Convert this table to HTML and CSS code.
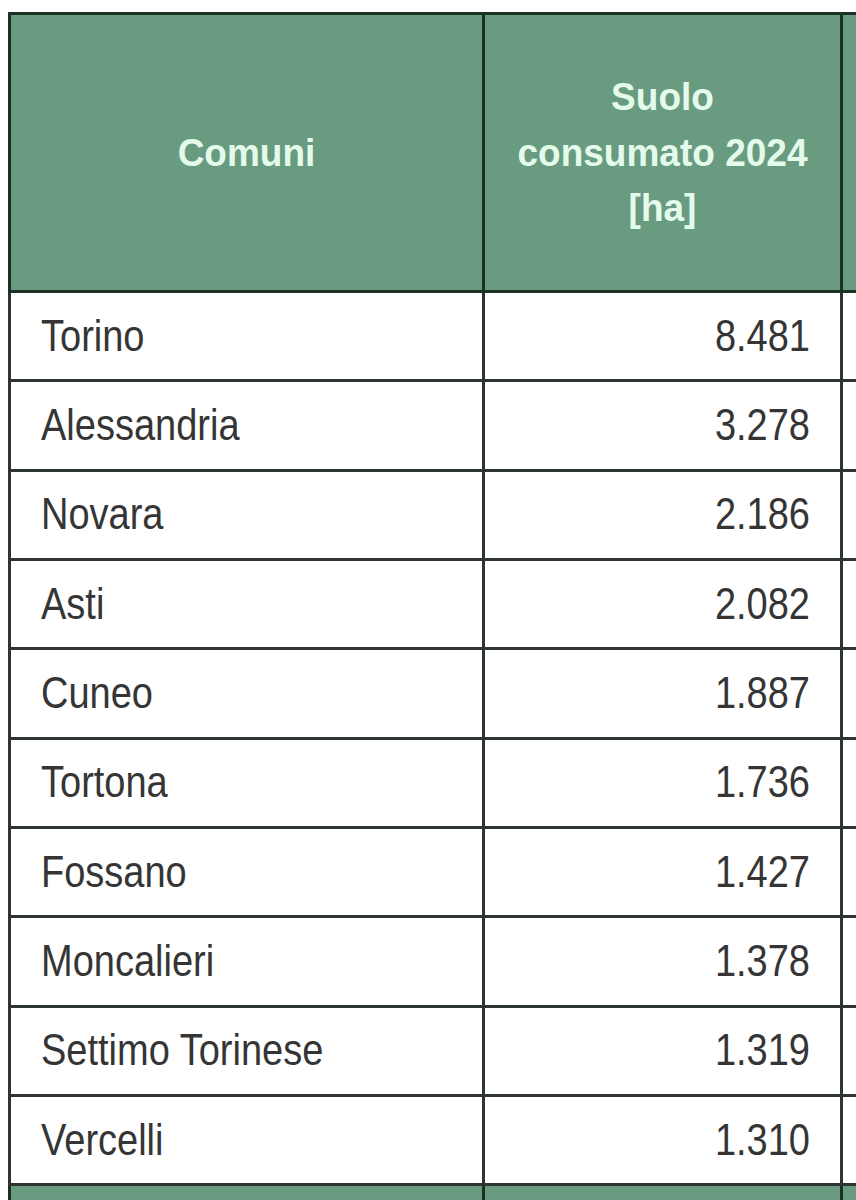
FILE: index.html
```html
<!DOCTYPE html>
<html lang="it">
<head>
<meta charset="utf-8">
<title>Suolo consumato 2024</title>
<link rel="stylesheet" href="styles.css">
</head>
<body>
<div class="page">
  <table class="data">
    <colgroup>
      <col class="c-name">
      <col class="c-val">
      <col class="c-extra">
    </colgroup>
    <thead>
      <tr>
        <th><span class="hs">Comuni</span></th>
        <th><span class="hs">Suolo<br>consumato 2024<br>[ha]</span></th>
        <th></th>
      </tr>
    </thead>
    <tbody>
      <tr><td class="name"><span class="bs">Torino</span></td><td class="num"><span class="bs">8.481</span></td><td></td></tr>
      <tr><td class="name"><span class="bs">Alessandria</span></td><td class="num"><span class="bs">3.278</span></td><td></td></tr>
      <tr><td class="name"><span class="bs">Novara</span></td><td class="num"><span class="bs">2.186</span></td><td></td></tr>
      <tr><td class="name"><span class="bs">Asti</span></td><td class="num"><span class="bs">2.082</span></td><td></td></tr>
      <tr><td class="name"><span class="bs">Cuneo</span></td><td class="num"><span class="bs">1.887</span></td><td></td></tr>
      <tr><td class="name"><span class="bs">Tortona</span></td><td class="num"><span class="bs">1.736</span></td><td></td></tr>
      <tr><td class="name"><span class="bs">Fossano</span></td><td class="num"><span class="bs">1.427</span></td><td></td></tr>
      <tr><td class="name"><span class="bs">Moncalieri</span></td><td class="num"><span class="bs">1.378</span></td><td></td></tr>
      <tr><td class="name"><span class="bs">Settimo Torinese</span></td><td class="num"><span class="bs">1.319</span></td><td></td></tr>
      <tr><td class="name"><span class="bs">Vercelli</span></td><td class="num"><span class="bs">1.310</span></td><td></td></tr>
    </tbody>
    <tfoot>
      <tr><td></td><td></td><td></td></tr>
    </tfoot>
  </table>
</div>
</body>
</html>
```

FILE: styles.css
```css
html, body {
  margin: 0;
  padding: 0;
  background: #ffffff;
  overflow: hidden;
}

.page {
  padding: 12px 0 0 8px;
  width: 1100px;
}

.data {
  border-collapse: collapse;
  table-layout: fixed;
  width: 1040px;
  font-family: "Liberation Sans", Arial, sans-serif;
}

.c-name { width: 474px; }
.c-val { width: 358px; }
.c-extra { width: 208px; }

.data th {
  background: #699b80;
  color: #e4fbec;
  font-weight: bold;
  font-size: 37px;
  line-height: 52px;
  height: 275px;
  border: 3px solid #1c3026;
  text-align: center;
  vertical-align: middle;
  padding: 0;
}

.hs {
  display: inline-block;
  transform: scaleY(1.07);
}

.data td {
  height: 86.35px;
  border: 3px solid #2e3431;
  font-size: 38px;
  color: #353535;
  padding: 0;
  vertical-align: middle;
}

.bs {
  display: inline-block;
  transform: scaleY(1.16);
}

.data td.name {
  padding-left: 30px;
  text-align: left;
}

.data td.num {
  padding-right: 30px;
  text-align: right;
}

.data tfoot td {
  background: #699b80;
  border-color: #1c3026;
}
```
